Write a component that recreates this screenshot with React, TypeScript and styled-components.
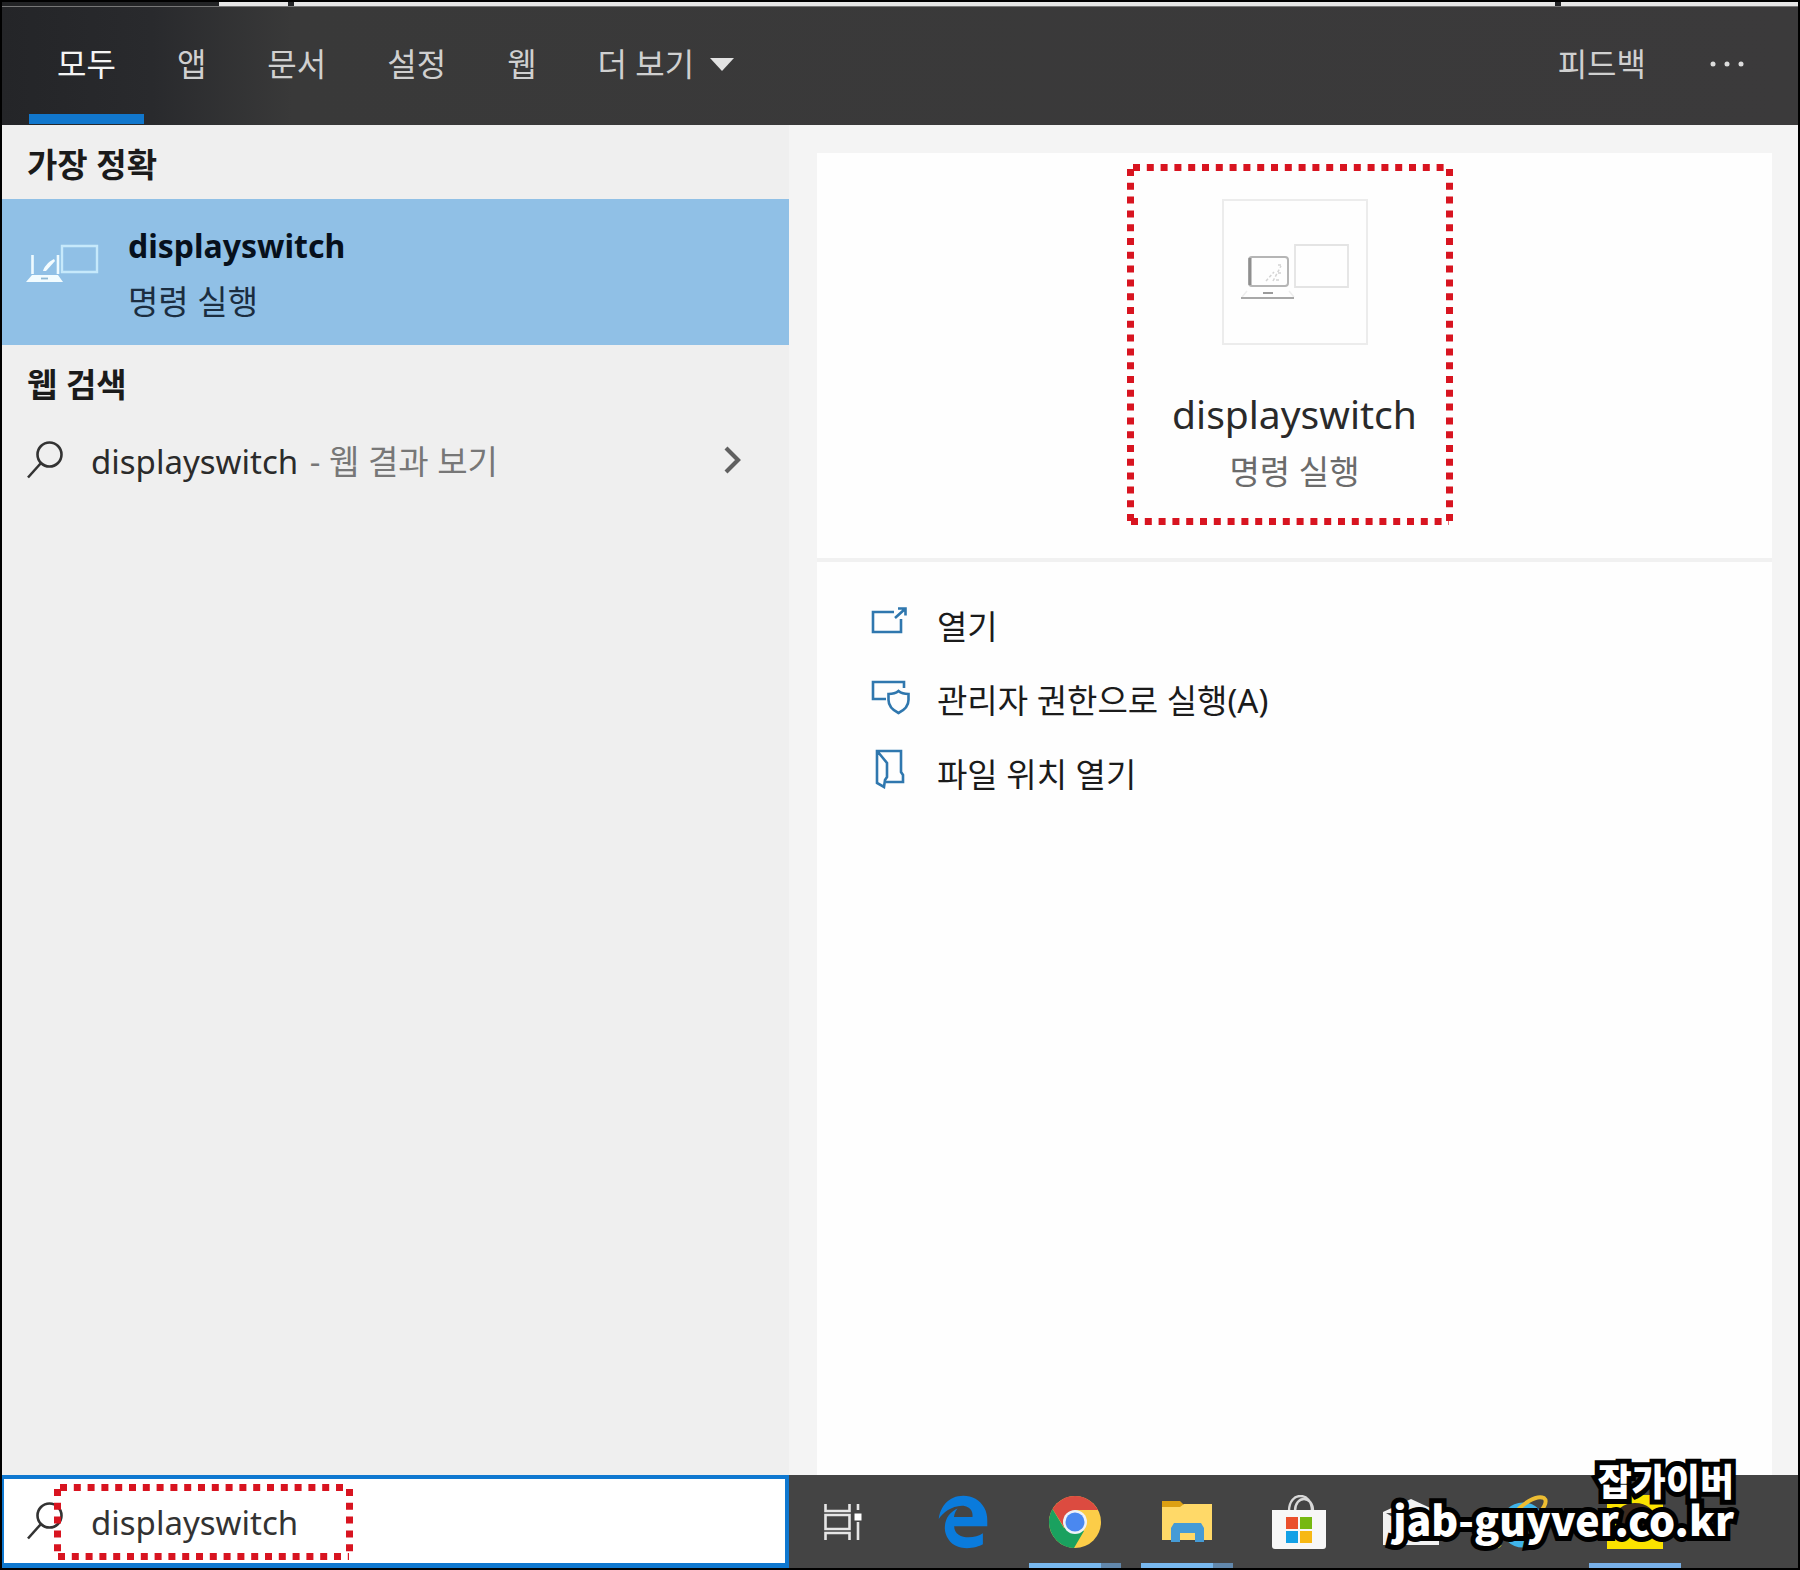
import React from 'react';
import styled, { createGlobalStyle, css } from 'styled-components';
import { FaEdgeLegacy } from 'react-icons/fa';

const GlobalStyle = createGlobalStyle`
  *, *::before, *::after { box-sizing: border-box; }
  body {
    margin: 0;
    background: #000;
    font-family: "Noto Sans", "Noto Sans CJK KR", sans-serif;
    font-size: 33px;
    color: #1b1b1b;
  }
  button, input { font: inherit; color: inherit; }
  svg { display: block; flex: none; }
`;

const columns = css`
  display: grid;
  grid-template-columns: minmax(0, 787fr) minmax(0, 1009fr);
`;

const plainButton = css`
  margin: 0;
  padding: 0;
  border: 0;
  background: none;
  text-align: left;
  cursor: pointer;
`;

const Frame = styled.div`
  position: relative;
  display: flex;
  flex-direction: column;
  min-height: 100vh;
  border: 2px solid #000;
  overflow: hidden;
`;

const WindowEdge = styled.div`
  display: flex;
  gap: 6px;
  height: 5px;
  padding-left: 217px;
  background: #222325;
  border-bottom: 1px solid #777;
`;

const EdgeStrip = styled.div<{ $grow: number }>`
  flex: ${(p) => p.$grow} 1 0;
  background: #e6e6e6;
`;

const Header = styled.header`
  display: flex;
  justify-content: space-between;
  height: 118px;
  padding: 0 26px 0 27px;
  font-size: 32px;
  background: linear-gradient(90deg, #242528 0, #292a2d 150px, #393939 290px, #3b3a3b 100%);
`;

const Tabs = styled.nav`
  display: flex;
  gap: 5px;
`;

const Tab = styled.button<{ $active?: boolean }>`
  ${plainButton}
  display: flex;
  align-items: center;
  gap: 16px;
  padding: 0 28px 8px;
  color: ${(p) => (p.$active ? '#f4f4f4' : '#d0d0d0')};
  background: ${(p) =>
    p.$active ? 'linear-gradient(#1177cd, #1177cd) left bottom 1px / 100% 10px no-repeat' : 'none'};
  svg { margin-top: 4px; }
`;

const HeaderTools = styled.div`
  display: flex;
  align-items: center;
  gap: 64px;
  padding: 0 28px 8px 0;
`;

const ToolButton = styled.button`
  ${plainButton}
  color: #d0d0d0;
  svg { margin-top: 4px; }
`;

const Body = styled.main`
  ${columns}
  flex: 1;
`;

const Results = styled.section`
  background: #efefef;
`;

const SectionTitle = styled.h2`
  margin: 0;
  padding: 5px 25px 0;
  font-size: 33px;
  font-weight: 700;
  line-height: 69px;
`;

const BestMatch = styled.button`
  ${plainButton}
  display: flex;
  align-items: center;
  gap: 28px;
  width: 100%;
  height: 146px;
  padding: 0 24px;
  background: #90c0e6;
  svg { margin-bottom: 18px; }
`;

const MatchText = styled.span`
  display: flex;
  flex-direction: column;
  line-height: 56px;
  padding-top: 4px;
`;

const MatchName = styled.strong`
  font-size: 32px;
  color: #07101c;
`;

const MatchKind = styled.span`
  color: #1b2d40;
`;

const WebResult = styled.button`
  ${plainButton}
  display: flex;
  align-items: center;
  gap: 28px;
  width: 100%;
  height: 82px;
  padding: 0 48px 0 25px;
`;

const Query = styled.span`
  flex: 1;
  color: #2b2b2b;
`;

const Hint = styled.span`
  padding-left: 3px;
  color: #777;
`;

const Details = styled.section`
  display: flex;
  flex-direction: column;
  padding: 28px 26px 0 28px;
  background: #f4f4f4;
`;

const Hero = styled.div`
  position: relative;
  display: flex;
  flex-direction: column;
  align-items: center;
  padding: 46px 0 57px;
  background: #fefefe;
  border-bottom: 4px solid #f1f1f1;
`;

const Tile = styled.div`
  display: grid;
  place-items: center;
  width: 146px;
  height: 146px;
  margin-bottom: 40px;
  border: 2px solid #ececec;
`;

const HeroName = styled.h1`
  margin: 0;
  font-size: 39px;
  font-weight: 400;
  line-height: 58px;
  color: #2a2a2a;
`;

const HeroKind = styled.p`
  margin: 0;
  line-height: 58px;
  color: #6b6b6b;
`;

const Actions = styled.ul`
  flex: 1;
  margin: 0;
  padding: 26px 54px;
  list-style: none;
  background: #fefefe;
`;

const Action = styled.button`
  ${plainButton}
  display: flex;
  align-items: center;
  gap: 26px;
  width: 100%;
  height: 74px;
  svg { margin-bottom: 8px; }
`;

const Footer = styled.footer`
  ${columns}
  height: 93px;
`;

const SearchBox = styled.label`
  position: relative;
  display: flex;
  align-items: center;
  gap: 28px;
  padding-left: 23px;
  background: #fff;
  border: solid #0f78d0;
  border-width: 4px 4px 5px 2px;
`;

const SearchInput = styled.input`
  flex: 1;
  min-width: 0;
  padding: 4px 0 0;
  border: 0;
  outline: 0;
  background: none;
  line-height: 56px;
  color: #333;
`;

const Taskbar = styled.nav`
  display: flex;
  gap: 20px;
  background: #444;
`;

const TaskButton = styled.button<{ $wide?: boolean }>`
  ${plainButton}
  display: flex;
  flex-direction: column;
  align-items: center;
  justify-content: center;
  position: relative;
  width: ${(p) => (p.$wide ? 108 : 92)}px;
`;

const Running = styled.span<{ $stacked?: boolean }>`
  position: absolute;
  inset: auto 0 0;
  height: 5px;
  background: ${(p) =>
    p.$stacked ? 'linear-gradient(90deg, #78b8ee 72px, #6288ac 72px)' : '#78b0e8'};
`;

const HeroMark = styled.div`
  position: absolute;
  top: 11px;
  left: calc(50% - 168px);
  pointer-events: none;
`;

const SearchMark = styled.div`
  position: absolute;
  top: 5px;
  left: 50px;
  pointer-events: none;
`;

const Watermark = styled.div`
  position: absolute;
  right: 64px;
  bottom: 30px;
  display: flex;
  flex-direction: column;
  align-items: flex-end;
  font-family: "Noto Sans CJK KR", sans-serif;
  font-weight: 900;
  line-height: 40px;
  color: #fff;
  -webkit-text-stroke: 10px #000;
  paint-order: stroke fill;
  stroke-linejoin: round;
  pointer-events: none;
`;

const WatermarkName = styled.span`
  font-size: 37px;
  line-height: 36px;
`;

const WatermarkSite = styled.span`
  font-size: 41px;
`;

function DottedMark({ width, height }: { width: number; height: number }) {
  const w = width - 3.5;
  const h = height - 3.5;
  return (
    <svg width={width} height={height} fill="none" stroke="#d81420" strokeWidth="7" strokeDasharray="7 6.8" aria-hidden>
      <path d={`M6 3.5H${width - 7}`} />
      <path d={`M4 ${h}H${width - 4}`} />
      <path d={`M3.5 5V${height - 4}`} />
      <path d={`M${w} 5V${height - 4}`} />
    </svg>
  );
}

const SearchIcon = () => (
  <svg width="36" height="38" viewBox="0 0 36 38" fill="none" stroke="#333" strokeWidth="2.6" aria-hidden>
    <circle cx="22.5" cy="13.5" r="12" />
    <path d="M14 22L1 36.5" />
  </svg>
);

const ChevronIcon = () => (
  <svg width="17" height="28" viewBox="0 0 17 28" fill="none" stroke="#606060" strokeWidth="4.2" aria-hidden>
    <path d="M2 2l12 12L2 26" />
  </svg>
);

const DisplaysIcon = () => (
  <svg width="74" height="40" viewBox="0 0 74 40" aria-hidden>
    <path d="M36 3h35v26H36z" fill="none" stroke="#c6e9fb" strokeWidth="2.4" />
    <path d="M6.500 12v19M32 12v19" stroke="#eefaff" strokeWidth="2.6" />
    <path d="M17 28c1-4 5-9 11-12l1 2-9 10z" fill="#f4fcff" />
    <path d="M6 32h26l5 7H0z" fill="#f2fcff" />
    <path d="M15 35.500h7" stroke="#8fb8d4" strokeWidth="1.800" />
  </svg>
);

const TileIcon = () => (
  <svg width="110" height="58" viewBox="0 0 110 58" fill="none" aria-hidden>
    <path d="M55 2h53v42H55z" stroke="#e4e4e4" strokeWidth="1.800" />
    <rect x="9" y="14" width="39" height="29" rx="3" stroke="#b5b5b5" strokeWidth="2" />
    <path d="M10 15v27" stroke="#8f8f8f" strokeWidth="3" />
    <path d="M26 38l8-9M33 38l8-15M38 22h4M38 30h4M36 37h4" stroke="#d4d4d4" strokeWidth="1.500" strokeDasharray="3 2" />
    <path d="M23 50h10" stroke="#9b9b9b" strokeWidth="2" />
    <path d="M7 48l-5 6M49 48l5 6" stroke="#eee" strokeWidth="1.500" />
    <path d="M1 55h53" stroke="#a8a8a8" strokeWidth="2" />
  </svg>
);

const OpenIcon = () => (
  <svg width="40" height="40" viewBox="0 0 40 40" fill="none" stroke="#2f77ae" strokeWidth="2.600" aria-hidden>
    <path d="M23 11H2v20h28V18" />
    <path d="M24 17L34 8M27 7.500h7.500v7" />
  </svg>
);

const AdminIcon = () => (
  <svg width="40" height="40" viewBox="0 0 40 40" fill="none" stroke="#2f77ae" strokeWidth="2.600" aria-hidden>
    <path d="M15 24H2V7h31v6" />
    <path d="M27.500 16c-3 2.500-6 3-10 3v6c0 6 4 10 10 13 6-3 10-7 10-13v-6c-4 0-7-.5-10-3z" />
  </svg>
);

const LocationIcon = () => (
  <svg width="40" height="40" viewBox="0 0 40 40" fill="none" stroke="#2f77ae" strokeWidth="2.600" aria-hidden>
    <path d="M15 33h17v-7l-2-3V2H6v32l7 4 1-7 2-3V14L7 3" />
  </svg>
);

const TaskViewIcon = () => (
  <svg width="38" height="36" viewBox="0 0 38 36" fill="none" stroke="#e6e6e6" strokeWidth="2.600" aria-hidden>
    <path d="M1.500 0v7h24V0M1.500 36v-7h24v7M1.500 11h24v14h-24zM34 0v6M34 18v18" />
    <path d="M30.500 9.500h7v7h-7z" fill="#fff" stroke="none" />
  </svg>
);

const ChromeIcon = () => (
  <svg width="54" height="54" viewBox="0 0 54 54" aria-hidden>
    <circle cx="27" cy="27" r="26" fill="#fccd48" />
    <path d="M27 15h23A26 26 0 0 0 4.500 14l12 19z" fill="#dc4b40" />
    <path d="M4.500 14A26 26 0 0 0 26 53L36 36 27 27 16 33z" fill="#1aa15f" />
    <circle cx="27" cy="27" r="12" fill="#eef2f8" />
    <circle cx="27" cy="27" r="9.500" fill="#4a88f0" />
  </svg>
);

const ExplorerIcon = () => (
  <svg width="50" height="42" viewBox="0 0 50 42" aria-hidden>
    <path d="M0 0h18l4 4v6H0z" fill="#dda012" />
    <path d="M0 6h18l4-3h28v36H0z" fill="#ffd968" />
    <path d="M9 27l3-5h27l3 5v14h-9v-9H18v9H9z" fill="#459bd6" />
    <path d="M18 32h15v7H18z" fill="#ffd968" />
  </svg>
);

const StoreIcon = () => (
  <svg width="54" height="54" viewBox="0 0 54 54" aria-hidden>
    <path d="M17 16C17-4 40-4 40 16M23 16c0-16 18-16 18 0" fill="none" stroke="#d8d8d8" strokeWidth="2.400" />
    <path d="M0 15h54v36q0 3-3 3H3q-3 0-3-3z" fill="#f7f7f7" />
    <path d="M14 22h12v12H14z" fill="#ea4f2c" />
    <path d="M28 22h12v12H28z" fill="#76b811" />
    <path d="M14 36h12v12H14z" fill="#12a0e6" />
    <path d="M28 36h12v12H28z" fill="#f7b814" />
  </svg>
);

const MailIcon = () => (
  <svg width="56" height="46" viewBox="0 0 56 46" aria-hidden>
    <path d="M0 13L28 0l28 13v33H0z" fill="#f2f2f2" />
    <path d="M3 14h50L28 29z" fill="#4a4a4a" />
  </svg>
);

const ExplorerWebIcon = () => (
  <svg width="54" height="54" viewBox="0 0 54 54" fill="none" aria-hidden>
    <circle cx="27" cy="30" r="18" stroke="#3fb4ea" strokeWidth="9" />
    <path d="M12 31h34" stroke="#6ccdf4" strokeWidth="7" />
    <path d="M4 52C-6 40 32-4 48 3c4 3 0 9-3 13" stroke="#edbd32" strokeWidth="4" />
  </svg>
);

const TalkIcon = () => (
  <svg width="56" height="54" viewBox="0 0 56 54" aria-hidden>
    <path d="M0 0h56v54H0z" fill="#fbe300" />
    <path d="M28 8c-12 0-20 7-20 16 0 6 4 11 9 13l-3 10 11-7c16 1 23-8 23-16 0-9-8-16-20-16z" fill="#3c2b20" />
  </svg>
);

const tabs = ['모두', '앱', '문서', '설정', '웹'];

const actions = [
  { label: '열기', icon: <OpenIcon /> },
  { label: '관리자 권한으로 실행(A)', icon: <AdminIcon /> },
  { label: '파일 위치 열기', icon: <LocationIcon /> },
];

const apps = [
  { name: 'Edge', icon: <FaEdgeLegacy size={54} color="#0a7bdc" /> },
  { name: 'Chrome', icon: <ChromeIcon />, running: true, stacked: true },
  { name: 'File Explorer', icon: <ExplorerIcon />, running: true, stacked: true },
  { name: 'Store', icon: <StoreIcon /> },
  { name: 'Mail', icon: <MailIcon /> },
  { name: 'Internet Explorer', icon: <ExplorerWebIcon /> },
  { name: 'Talk', icon: <TalkIcon />, running: true },
];

export default function App() {
  return (
    <Frame>
      <GlobalStyle />
      <WindowEdge>
        <EdgeStrip $grow={69} />
        <EdgeStrip $grow={1260} />
        <EdgeStrip $grow={237} />
      </WindowEdge>
      <Header>
        <Tabs>
          {tabs.map((tab, i) => (
            <Tab key={tab} type="button" $active={i === 0}>
              {tab}
            </Tab>
          ))}
          <Tab type="button">
            더 보기
            <svg width="24" height="13" viewBox="0 0 24 13" fill="#e2e2e2" aria-hidden>
              <path d="M0 0h24L12 13z" />
            </svg>
          </Tab>
        </Tabs>
        <HeaderTools>
          <ToolButton type="button">피드백</ToolButton>
          <ToolButton type="button" aria-label="옵션">
            <svg width="34" height="6" viewBox="0 0 34 6" fill="#dcdcdc" aria-hidden>
              <circle cx="3" cy="3" r="2.500" />
              <circle cx="17" cy="3" r="2.500" />
              <circle cx="31" cy="3" r="2.500" />
            </svg>
          </ToolButton>
        </HeaderTools>
      </Header>
      <Body>
        <Results>
          <SectionTitle>가장 정확</SectionTitle>
          <BestMatch type="button">
            <DisplaysIcon />
            <MatchText>
              <MatchName>displayswitch</MatchName>
              <MatchKind>명령 실행</MatchKind>
            </MatchText>
          </BestMatch>
          <SectionTitle>웹 검색</SectionTitle>
          <WebResult type="button">
            <SearchIcon />
            <Query>
              displayswitch <Hint>- 웹 결과 보기</Hint>
            </Query>
            <ChevronIcon />
          </WebResult>
        </Results>
        <Details>
          <Hero>
            <Tile>
              <TileIcon />
            </Tile>
            <HeroName>displayswitch</HeroName>
            <HeroKind>명령 실행</HeroKind>
            <HeroMark>
              <DottedMark width={326} height={361} />
            </HeroMark>
          </Hero>
          <Actions>
            {actions.map((a) => (
              <li key={a.label}>
                <Action type="button">
                  {a.icon}
                  {a.label}
                </Action>
              </li>
            ))}
          </Actions>
        </Details>
      </Body>
      <Footer>
        <SearchBox>
          <SearchIcon />
          <SearchInput type="text" defaultValue="displayswitch" aria-label="검색" />
          <SearchMark>
            <DottedMark width={299} height={76} />
          </SearchMark>
        </SearchBox>
        <Taskbar>
          <TaskButton type="button" aria-label="Task View" $wide>
            <TaskViewIcon />
          </TaskButton>
          {apps.map((app) => (
            <TaskButton key={app.name} type="button" aria-label={app.name}>
              {app.icon}
              {app.running && <Running $stacked={app.stacked} />}
            </TaskButton>
          ))}
        </Taskbar>
      </Footer>
      <Watermark>
        <WatermarkName>잡가이버</WatermarkName>
        <WatermarkSite>jab-guyver.co.kr</WatermarkSite>
      </Watermark>
    </Frame>
  );
}
